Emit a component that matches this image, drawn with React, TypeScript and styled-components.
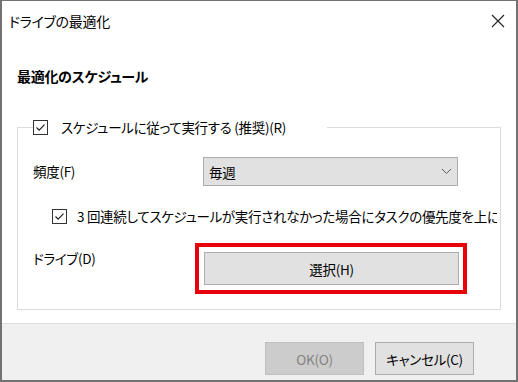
import { FC } from "react";
import styled, { createGlobalStyle } from "styled-components";

const GlobalStyle = createGlobalStyle`
    html, body {
        margin:0;
        padding:0;
        background:#ffffff;
    }
    body {
        font-family:"Noto Sans CJK JP","Noto Sans",sans-serif;
        font-feature-settings:"palt";
        font-size:13.5px;
        letter-spacing:-0.3px;
        color:#000;
    }
`

// チェックボックス
const CheckBox:FC<{checked:boolean}> = ({checked})=>(
    <SBox>
        {checked && (
            <svg width="13" height="13" viewBox="0 0 13 13">
                <path d="M2.5 6.5 L5.2 9.2 L10.5 3.6" fill="none" stroke="#222" strokeWidth="1.2"/>
            </svg>
        )}
    </SBox>
);

const Chevron = ()=>(
    <svg width="11" height="7" viewBox="0 0 11 7">
        <path d="M1 1 L5.5 5.5 L10 1" fill="none" stroke="#5a5a5a" strokeWidth="1"/>
    </svg>
);

const CloseIcon = ()=>(
    <svg width="14" height="14" viewBox="0 0 14 14">
        <path d="M1 1 L13 13 M13 1 L1 13" stroke="#222" strokeWidth="1.1"/>
    </svg>
);

export default function App(){
    return(
        <>
        <GlobalStyle/>
        <SWindow>
            <STitleBar>
                <STitle>ドライブの最適化</STitle>
                <SCloseButton><CloseIcon/></SCloseButton>
            </STitleBar>
            <SBody>
                <SHeading>最適化のスケジュール</SHeading>
                <SGroup>
                    <SLegend>
                        <CheckBox checked/>
                        <span>スケジュールに従って実行する (推奨)(R)</span>
                    </SLegend>
                    <SRow>
                        <SLabel>頻度(F)</SLabel>
                        <SSelect>
                            <span>毎週</span>
                            <Chevron/>
                        </SSelect>
                    </SRow>
                    <SSubCheck>
                        <CheckBox checked/>
                        <span>3 回連続してスケジュールが実行されなかった場合にタスクの優先度を上に</span>
                    </SSubCheck>
                    <SRow $top={18}>
                        <SLabel $pad={6}>ドライブ(D)</SLabel>
                        <SHighlight>
                            <SButton $wide>選択(H)</SButton>
                        </SHighlight>
                    </SRow>
                </SGroup>
            </SBody>
            <SFooter>
                <SButton disabled>OK(O)</SButton>
                <SButton>キャンセル(C)</SButton>
            </SFooter>
        </SWindow>
        </>
    );
}

const SWindow = styled.div`
    width:518px;
    height:382px;
    box-sizing:border-box;
    border:2px solid #727272;
    border-top-width:1px;
    display:flex;
    flex-direction:column;
    background:#fff;
    overflow:hidden;
`

const STitleBar = styled.div`
    height:40px;
    display:flex;
    align-items:center;
    justify-content:space-between;
    padding:0 11px 0 7px;
`

const STitle = styled.div`
    font-size:14px;
    line-height:20px;
    margin-top:-1px;
`

const SCloseButton = styled.div`
    width:14px;
    height:14px;
    display:flex;
    margin-top:-1px;
`

const SBody = styled.div`
    flex:1;
    padding:0 15px;
`

const SHeading = styled.div`
    font-weight:bold;
    font-size:14px;
    line-height:20px;
    margin-top:25px;
    margin-bottom:32px;
`

const SGroup = styled.fieldset`
    margin:0;
    padding:0 0 15px 0;
    border:1px solid #dcdcdc;
    min-width:0;
`

const SLegend = styled.legend`
    margin-left:15px;
    padding:0;
    width:294px;
    height:18px;
    display:flex;
    align-items:center;
    gap:13px;
    line-height:18px;
`

const SBox = styled.span`
    width:13px;
    height:13px;
    flex:none;
    border:1px solid #333;
    display:flex;
    background:#fff;
`

const SRow = styled.div<{$top?:number}>`
    display:grid;
    grid-template-columns:170px 1fr;
    align-items:start;
    padding-left:15px;
    margin-top:${({$top}) => ($top ?? 21)}px;
`

const SLabel = styled.div<{$pad?:number}>`
    line-height:18px;
    padding-top:${({$pad}) => ($pad ?? 5)}px;
`

const SSelect = styled.div`
    width:255px;
    height:29px;
    box-sizing:border-box;
    border:1px solid #adadad;
    background:#e1e1e1;
    display:flex;
    align-items:center;
    justify-content:space-between;
    padding:0 5px 0 5px;
    line-height:18px;
`

const SSubCheck = styled.div`
    display:flex;
    align-items:center;
    gap:10px;
    margin:21px 0 0 34px;
    width:445px;
    height:18px;
    white-space:nowrap;
    overflow:hidden;
    line-height:18px;
`

const SHighlight = styled.div`
    margin-left:-8px;
    width:272px;
    box-sizing:border-box;
    border:4px solid #e8000b;
    padding:5px 4px 5px 5px;
`

const SButton = styled.button<{$wide?:boolean}>`
    width:${({$wide}) => ($wide ? "255px" : "99px")};
    height:33px;
    box-sizing:border-box;
    border:1px solid #adadad;
    background:#e1e1e1;
    font-family:inherit;
    font-feature-settings:"palt";
    font-size:13.5px;
    letter-spacing:-0.3px;
    color:#000;
    padding:0;
    display:flex;
    align-items:center;
    justify-content:center;

    &:disabled{
        background:#cccccc;
        border-color:#bfbfbf;
        color:#838383;
    }
`

const SFooter = styled.div`
    height:57px;
    box-sizing:border-box;
    border-top:1px solid #dfdfdf;
    background:#f0f0f0;
    display:flex;
    justify-content:flex-end;
    align-items:flex-start;
    gap:11px;
    padding:18px 42px 0 0;
`
